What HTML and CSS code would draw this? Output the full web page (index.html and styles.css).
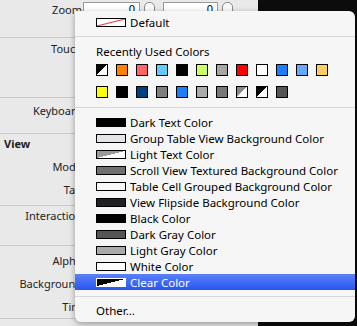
FILE: index.html
```html
<!DOCTYPE html>
<html lang="en">
<head>
    <meta charset="UTF-8">
    <title>Color picker menu</title>
    <link rel="stylesheet" href="styles.css">
</head>
<body>
    <div class="stage">
        <div class="inspector">
            <div class="section sec-zoom">
                <div class="row">
                    <span class="label">Zoom</span>
                    <span class="field">0</span>
                    <span class="stepper"></span>
                    <span class="field field-wide">0</span>
                    <span class="stepper"></span>
                </div>
            </div>
            <div class="section sec-touch">
                <div class="row"><span class="label">Touch</span></div>
            </div>
            <div class="section sec-keyboard">
                <div class="row"><span class="label">Keyboard</span></div>
            </div>
            <div class="section sec-view">
                <div class="row"><span class="heading">View</span></div>
                <div class="row"><span class="label">Mode</span></div>
                <div class="row"><span class="label">Tag</span></div>
            </div>
            <div class="section sec-interaction">
                <div class="row"><span class="label">Interaction</span></div>
            </div>
            <div class="section sec-drawing">
                <div class="row"><span class="label">Alpha</span></div>
                <div class="row"><span class="label">Background</span></div>
                <div class="row"><span class="label">Tint</span></div>
            </div>
        </div>
        <div class="backdrop"></div>

        <div class="menu">
            <div class="item">
                <span class="swatch swatch-default"></span>
                <span>Default</span>
            </div>
            <div class="sep sep-top"></div>
            <div class="item header">Recently Used Colors</div>
            <div class="recent">
                <span class="chip diag-black"></span>
                <span class="chip" style="background:#ff7f00"></span>
                <span class="chip" style="background:#ff6467"></span>
                <span class="chip" style="background:#66c9ff"></span>
                <span class="chip" style="background:#000000"></span>
                <span class="chip" style="background:#ccff66"></span>
                <span class="chip" style="background:#a6a6a6"></span>
                <span class="chip" style="background:#ff0000"></span>
                <span class="chip" style="background:#ffffff"></span>
                <span class="chip" style="background:#1a7fff"></span>
                <span class="chip" style="background:#66a8ff"></span>
                <span class="chip" style="background:#ffcc66"></span>
            </div>
            <div class="recent">
                <span class="chip" style="background:#ffff00"></span>
                <span class="chip" style="background:#000000"></span>
                <span class="chip" style="background:#003f80"></span>
                <span class="chip" style="background:#7f7f7f"></span>
                <span class="chip" style="background:#1a7fff"></span>
                <span class="chip" style="background:#aaaaaa"></span>
                <span class="chip" style="background:#777777"></span>
                <span class="chip diag-gray"></span>
                <span class="chip diag-black"></span>
                <span class="chip" style="background:#555555"></span>
            </div>
            <div class="sep sep-mid"></div>

            <div class="item"><span class="swatch" style="background:#000"></span><span>Dark Text Color</span></div>
            <div class="item"><span class="swatch" style="background:#e4e4e8"></span><span>Group Table View Background Color</span></div>
            <div class="item"><span class="swatch diag-light"></span><span>Light Text Color</span></div>
            <div class="item"><span class="swatch" style="background:#707070"></span><span>Scroll View Textured Background Color</span></div>
            <div class="item"><span class="swatch" style="background:#f8f8f8"></span><span>Table Cell Grouped Background Color</span></div>
            <div class="item"><span class="swatch" style="background:#202124"></span><span>View Flipside Background Color</span></div>
            <div class="item"><span class="swatch" style="background:#000"></span><span>Black Color</span></div>
            <div class="item"><span class="swatch" style="background:#555"></span><span>Dark Gray Color</span></div>
            <div class="item"><span class="swatch" style="background:#aaa"></span><span>Light Gray Color</span></div>
            <div class="item"><span class="swatch" style="background:#fff"></span><span>White Color</span></div>
            <div class="item selected"><span class="swatch diag-black"></span><span>Clear Color</span></div>

            <div class="sep sep-bottom"></div>
            <div class="item">Other...</div>
        </div>
    </div>
</body>
</html>
```

FILE: styles.css
```css
body {
    margin: 0;
    font-family: "Noto Sans", "DejaVu Sans", sans-serif;
    background-color: #111;
}

.stage {
    position: relative;
    display: flex;
    width: 357px;
    height: 326px;
    overflow: hidden;
}

/* inspector panel behind the menu */
.inspector {
    width: 258px;
    background-color: #e9e9e9;
}

.backdrop {
    flex: 1;
    background-color: #0c0c0c;
}

.section {
    display: flex;
    flex-direction: column;
    gap: 7px;
    border-bottom: 1px solid #c9c9c9;
    box-sizing: border-box;
}

.sec-zoom { height: 38px; padding-top: 0; }
.sec-touch { height: 60px; padding-top: 2px; }
.sec-keyboard { height: 36px; padding-top: 4px; }
.sec-view { height: 72px; padding-top: 1px; }
.sec-interaction { height: 40px; padding-top: 1px; }
.sec-drawing { height: 73px; padding-top: 6px; }

.row {
    display: flex;
    align-items: center;
    height: 16px;
}

.sec-zoom .row {
    align-items: flex-start;
    padding-top: 2px;
}

.label {
    width: 82px;
    text-align: right;
    font-size: 11px;
    color: #222;
}

.heading {
    padding-left: 4px;
    font-size: 11px;
    font-weight: bold;
    color: #222;
}

.field {
    width: 57px;
    height: 15px;
    margin-left: 1px;
    padding-right: 4px;
    box-sizing: border-box;
    background-color: #fff;
    border: 1px solid #9a9a9a;
    font-size: 11px;
    text-align: right;
    line-height: 10px;
    padding-top: 1px;
}

.field-wide {
    width: 55px;
    margin-left: 8px;
}

.stepper {
    width: 9px;
    height: 13px;
    margin-left: 4px;
    border: 1px solid #8a8a8a;
    border-radius: 5px;
    background-color: #fafafa;
}

/* popup menu */
.menu {
    position: absolute;
    left: 75px;
    top: 11px;
    width: 280px;
    height: 311px;
    box-sizing: border-box;
    padding-top: 3px;
    background-color: #f6f6f6;
    border-radius: 0 6px 6px 6px;
    box-shadow: 0 2px 6px rgba(0, 0, 0, 0.35);
    font-size: 11.5px;
    color: #000;
}

.item {
    display: flex;
    align-items: center;
    height: 16px;
    padding-left: 21px;
    white-space: nowrap;
}

.item.selected {
    background: linear-gradient(#5b80f8, #2a55f0);
    color: #fff;
}

.header {
    padding-left: 21px;
}

.swatch {
    width: 30px;
    height: 9px;
    margin-right: 4px;
    box-sizing: border-box;
    border: 1px solid #000;
}

.swatch-default {
    background: linear-gradient(to bottom right, #fff calc(50% - 1px), #e33 50%, #fff calc(50% + 1px));
}

.diag-black {
    background: linear-gradient(to bottom right, #000 50%, #fff 50%);
}

.diag-gray {
    background: linear-gradient(to bottom right, #888 50%, #fff 50%);
}

.diag-light {
    background: linear-gradient(to bottom right, #999 50%, #fff 50%);
}

.selected .swatch {
    border-color: #fff;
}

.recent {
    display: flex;
    gap: 8px;
    padding-left: 21px;
    margin-top: 5px;
    margin-bottom: 10px;
}

.recent + .recent {
    margin-bottom: 0;
}

.chip {
    width: 12px;
    height: 12px;
    box-sizing: border-box;
    border: 1px solid #000;
}

.sep {
    height: 1px;
    background-color: #d8d8d8;
}

.sep-top { margin: 6px 0 6px; }
.sep-mid { margin: 9px 0 6px; }
.sep-bottom { margin: 6px 0 5px; }
```
